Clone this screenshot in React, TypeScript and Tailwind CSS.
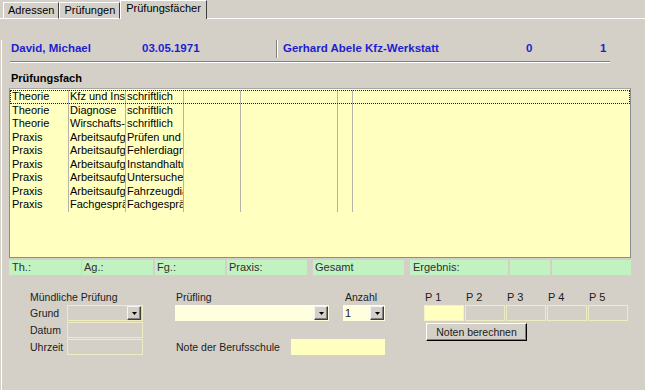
import React from "react"

// Prüfungsfächer form, Win32-style dialog panel
const rows: [string, string, string][] = [
  ["Theorie", "Kfz und Instandhaltung", "schriftlich"],
  ["Theorie", "Diagnose", "schriftlich"],
  ["Theorie", "Wirschafts- und Sozialkunde", "schriftlich"],
  ["Praxis", "Arbeitsaufgabe 1", "Prüfen und Messen"],
  ["Praxis", "Arbeitsaufgabe 2", "Fehlerdiagnose"],
  ["Praxis", "Arbeitsaufgabe 3", "Instandhaltung"],
  ["Praxis", "Arbeitsaufgabe 4", "Untersuchen"],
  ["Praxis", "Arbeitsaufgabe 5", "Fahrzeugdiagnose"],
  ["Praxis", "Fachgespräch", "Fachgespräch"],
]

function DropButton() {
  return (
    <div className="flex h-[14px] w-[14px] shrink-0 items-center justify-center border border-t-[#f4f4f4] border-l-[#f4f4f4] border-r-[#404040] border-b-[#404040] bg-[#d4d0c8] shadow-[inset_-1px_-1px_#808080]">
      <svg width="5" height="3" viewBox="0 0 5 3">
        <path d="M0 0h5L2.5 3z" fill="#000" />
      </svg>
    </div>
  )
}

function Tab({ label, active }: { label: string; active?: boolean }) {
  if (active) {
    return (
      <div className="relative z-10 h-[19px] border-l border-t border-r border-l-white border-t-white border-r-[#404040] bg-[#d4d0c8] px-[5px] leading-[14px]">
        {label}
      </div>
    )
  }
  return (
    <div className="h-[17px] border border-l-white border-t-white border-r-[#404040] border-b-white px-[4px] leading-[15px]">
      {label}
    </div>
  )
}

export default function App() {
  return (
    <div className="h-[390px] w-[645px] overflow-hidden bg-[#d4d0c8] font-['Liberation_Sans',Arial,sans-serif] text-[11px] text-black">
      {/* Tabs */}
      <div className="flex h-[19px] items-end">
        <div className="h-px w-[3px] bg-white" />
        <Tab label="Adressen" />
        <Tab label="Prüfungen" />
        <Tab label="Prüfungsfächer" active />
        <div className="h-px flex-1 bg-white" />
      </div>

      <div className="ml-px h-[371px] border-l border-white">
        {/* Header line */}
        <div className="mt-[21px] flex h-[18px] items-center pl-[9px] text-[11.5px] font-bold text-[#1e1ed0]">
          <div className="w-[131px]">David, Michael</div>
          <div className="w-[134px]">03.05.1971</div>
          <div className="h-[18px] w-px bg-[#808080]" />
          <div className="h-[18px] w-px bg-white" />
          <div className="w-[248px] pl-[5px]">Gerhard Abele Kfz-Werkstatt</div>
          <div className="w-[74px]">0</div>
          <div>1</div>
        </div>
        <div className="ml-[8px] mt-[3px] w-[600px]">
          <div className="h-px bg-[#808080]" />
          <div className="h-px bg-white" />
        </div>

        <div className="ml-[9px] mt-[8px] font-bold leading-[14px]">Prüfungsfach</div>

        {/* Grid */}
        <div className="ml-[7px] mt-[3px] h-[170px] w-[622px] border border-[#8c8c8c] border-t-[#a8a8a8] bg-[#ffffc0] pt-px">
          {rows.map((r, i) => (
            <div key={i} className="relative flex h-[13.5px] leading-[13px]">
              <div className="w-[59px] overflow-hidden whitespace-nowrap border-r border-[#b4b4a8] pl-[2px]">{r[0]}</div>
              <div className="w-[57px] overflow-hidden whitespace-nowrap border-r border-[#b4b4a8] pl-px">{r[1]}</div>
              <div className="w-[58px] overflow-hidden whitespace-nowrap border-r border-[#b4b4a8] pl-px">{r[2]}</div>
              <div className="w-[57px] border-r border-[#b4b4a8]" />
              <div className="w-[97px] border-r border-[#b4b4a8]" />
              <div className="w-[15px] border-r border-[#b4b4a8]" />
              {i === 0 && (
                <div className="pointer-events-none absolute inset-0 border border-dotted border-[#202020]" />
              )}
            </div>
          ))}
        </div>

        {/* Summary */}
        <div className="ml-[7px] mt-[2px] flex h-[15px] leading-[15px] text-[#303030]">
          <div className="w-[72px] bg-[#c2f2c2] pl-[3px]">Th.:</div>
          <div className="ml-px w-[71px] bg-[#c2f2c2] pl-[2px]">Ag.:</div>
          <div className="ml-[2px] w-[70px] bg-[#c2f2c2] pl-[2px]">Fg.:</div>
          <div className="ml-[2px] w-[80px] bg-[#c2f2c2] pl-[2px]">Praxis:</div>
          <div className="ml-[6px] w-[91px] bg-[#c2f2c2] pl-[2px]">Gesamt</div>
          <div className="ml-[6px] w-[98px] bg-[#c2f2c2] pl-[3px]">Ergebnis:</div>
          <div className="ml-[2px] w-[40px] bg-[#c2f2c2]" />
          <div className="ml-[2px] w-[79px] bg-[#c2f2c2]" />
        </div>

        {/* Lower form */}
        <div className="mt-[16px] flex text-[10.5px] leading-[13px] text-[#202020]">
          <div className="ml-[28px] flex flex-col">
            <div className="h-[14px]">Mündliche Prüfung</div>
            <div className="flex h-[16px] items-center">
              <div className="w-[37px]">Grund</div>
              <div className="flex h-[16px] w-[76px] items-center justify-end border border-[#eeecc0] pr-px">
                <DropButton />
              </div>
            </div>
            <div className="mt-px flex h-[16px] items-center">
              <div className="w-[37px]">Datum</div>
              <div className="h-[16px] w-[76px] border border-[#eeecc0]" />
            </div>
            <div className="mt-px flex h-[16px] items-center">
              <div className="w-[37px]">Uhrzeit</div>
              <div className="h-[16px] w-[76px] border border-[#eeecc0]" />
            </div>
          </div>

          <div className="ml-[32px] flex flex-col">
            <div className="flex h-[14px]">
              <div className="w-[168px] pl-px">Prüfling</div>
              <div className="pl-[2px]">Anzahl</div>
            </div>
            <div className="flex">
              <div className="flex h-[16px] w-[154px] items-center justify-end bg-[#ffffe0] pr-px">
                <DropButton />
              </div>
              <div className="ml-[14px] flex h-[16px] w-[42px] items-center justify-between bg-[#ffffe0] pl-[2px] pr-px text-[11px]">
                <span>1</span>
                <DropButton />
              </div>
            </div>
            <div className="mt-[18px] flex h-[16px] items-center">
              <div className="w-[116px] pl-px">Note der Berufsschule</div>
              <div className="h-[16px] w-[94px] bg-[#ffffc0]" />
            </div>
          </div>

          <div className="ml-[39px] flex flex-col">
            <div className="flex h-[14px] text-[11px]">
              {["P 1", "P 2", "P 3", "P 4", "P 5"].map((p) => (
                <div key={p} className="w-[41px] pl-px">{p}</div>
              ))}
            </div>
            <div className="flex gap-px">
              <div className="h-[16px] w-[40px] border border-[#f4f2c4] bg-[#ffffc0]" />
              <div className="h-[16px] w-[40px] border border-[#eeecc0]" />
              <div className="h-[16px] w-[40px] border border-[#eeecc0]" />
              <div className="h-[16px] w-[40px] border border-[#eeecc0]" />
              <div className="h-[16px] w-[40px] border border-[#eeecc0]" />
            </div>
            <button className="ml-[2px] mt-[2px] h-[18px] w-[101px] border border-t-white border-l-white border-r-black border-b-black bg-[#d4d0c8] text-center text-[10.5px] leading-[14px] shadow-[inset_-1px_-1px_#808080]">
              Noten berechnen
            </button>
          </div>
        </div>
      </div>
    </div>
  )
}
